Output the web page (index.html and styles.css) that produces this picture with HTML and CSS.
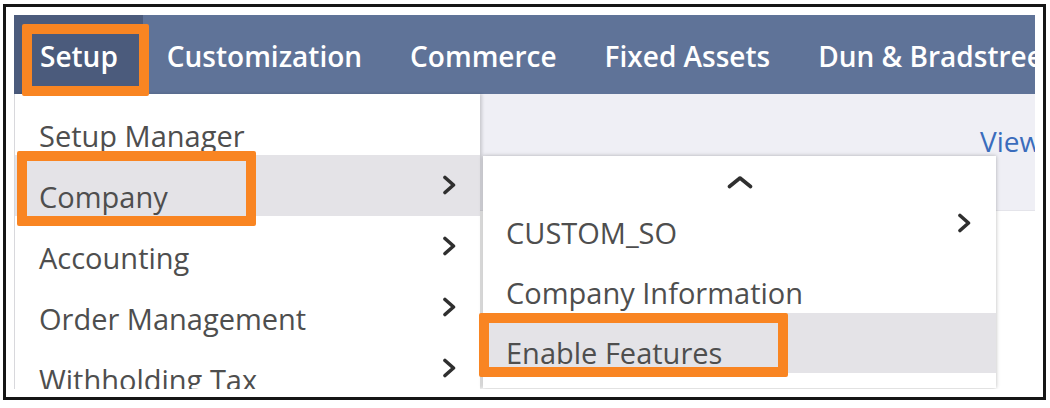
FILE: index.html
```html
<!DOCTYPE html>
<html lang="en">
<head>
<meta charset="utf-8">
<title>Setup menu</title>
<link rel="stylesheet" href="styles.css">
</head>
<body>
<div class="frame">
  <div class="screen">
    <nav class="topnav">
      <a class="tab active">Setup</a>
      <a class="tab">Customization</a>
      <a class="tab">Commerce</a>
      <a class="tab">Fixed Assets</a>
      <a class="tab">Dun &amp; Bradstreet</a>
    </nav>
    <div class="workspace">
      <ul class="menu">
        <li class="menu-item"><span class="label">Setup Manager</span></li>
        <li class="menu-item hover"><span class="label">Company</span><svg class="chev" viewBox="0 0 15 20"><polyline points="3,2.5 11.5,10 3,17.5"/></svg></li>
        <li class="menu-item"><span class="label">Accounting</span><svg class="chev" viewBox="0 0 15 20"><polyline points="3,2.5 11.5,10 3,17.5"/></svg></li>
        <li class="menu-item"><span class="label">Order Management</span><svg class="chev" viewBox="0 0 15 20"><polyline points="3,2.5 11.5,10 3,17.5"/></svg></li>
        <li class="menu-item"><span class="label">Withholding Tax</span><svg class="chev" viewBox="0 0 15 20"><polyline points="3,2.5 11.5,10 3,17.5"/></svg></li>
      </ul>
      <div class="page">
        <div class="page-header"><a class="link">View</a></div>
      </div>
    </div>
    <div class="submenu">
      <div class="scroll-up"><svg class="caret" viewBox="0 0 26 14"><polyline points="2.5,11.5 13,3 23.5,11.5"/></svg></div>
      <div class="sub-item"><span class="label">CUSTOM_SO</span><svg class="chev" viewBox="0 0 15 20"><polyline points="3,2.5 11.5,10 3,17.5"/></svg></div>
      <div class="sub-item"><span class="label">Company Information</span></div>
      <div class="sub-item hover"><span class="label">Enable Features</span></div>
    </div>
    <div class="callout callout-setup"></div>
    <div class="callout callout-company"></div>
    <div class="callout callout-enable"></div>
  </div>
</div>
</body>
</html>
```
FILE: styles.css
```css
* { box-sizing: border-box; }
html, body { margin: 0; padding: 0; background: #ffffff; }
body { font-family: "Open Sans", "DejaVu Sans", sans-serif; }

.frame {
  margin: 4px 0 0 3px;
  width: 1043px;
  height: 396px;
  border: 3px solid #161616;
  padding: 8px;
  background: #ffffff;
}

.screen {
  position: relative;
  width: 1021px;
  height: 374px;
  overflow: hidden;
  background: #ffffff;
}

.topnav {
  display: flex;
  height: 79px;
  background: #5f7398;
  white-space: nowrap;
}
.tab {
  display: block;
  padding: 22px 24px 0;
  font-size: 28px;
  line-height: 38px;
  font-weight: 600;
  color: #ffffff;
  flex: none;
}
.tab.active {
  background: #4b5b7c;
  padding: 22px 25px 0 26px;
}

.workspace {
  display: flex;
  height: 295px;
}

.menu {
  list-style: none;
  margin: 0;
  padding: 0;
  width: 466px;
  flex: none;
  background: #ffffff;
  border-left: 1px solid #d8d8dc;
  position: relative;
  z-index: 1;
  box-shadow: 2px 0 3px rgba(0, 0, 0, 0.16);
}
.menu-item {
  display: flex;
  justify-content: space-between;
  height: 61px;
  padding: 0 23px 0 24px;
}
.menu-item.hover { background: #e4e3e7; }

.label {
  align-self: flex-start;
  padding-top: 22px;
  font-size: 29px;
  line-height: 39px;
  color: #4e4e4e;
  white-space: nowrap;
}
.chev {
  align-self: center;
  width: 15px;
  height: 20px;
  margin-top: -2px;
}
.chev polyline, .caret polyline {
  fill: none;
  stroke: #2f2f2f;
  stroke-width: 3.6;
  stroke-linecap: round;
  stroke-linejoin: round;
}

.page {
  flex: 1;
  background: #ffffff;
}
.page-header {
  height: 116px;
  background: #efeff5;
  padding: 28px 0 0 500px;
  white-space: nowrap;
  box-shadow: 0 1px 0 #e4e4ea;
}
.link {
  font-size: 28px;
  line-height: 38px;
  color: #3a6cbc;
}

.submenu {
  position: absolute;
  left: 469px;
  top: 141px;
  width: 513px;
  height: 232px;
  background: #ffffff;
  z-index: 2;
  box-shadow: 0 0 4px rgba(0, 0, 0, 0.28);
}
.scroll-up {
  height: 37px;
  display: flex;
  justify-content: center;
  align-items: flex-end;
  padding-bottom: 4px;
}
.caret { width: 26px; height: 14px; }
.sub-item {
  display: flex;
  justify-content: space-between;
  height: 60px;
  padding: 0 24px 0 23px;
}
.sub-item .label { padding-top: 20px; }
.sub-item .chev { margin-top: 0; }
.sub-item.hover { background: #e4e3e7; }

.callout {
  position: absolute;
  z-index: 5;
  border: 10px solid #f98522;
  border-radius: 2px;
}
.callout-setup { left: 8px; top: 9px; width: 127px; height: 72px; }
.callout-company { left: 3px; top: 136px; width: 239px; height: 75px; }
.callout-enable { left: 465px; top: 298px; width: 309px; height: 64px; }
```
